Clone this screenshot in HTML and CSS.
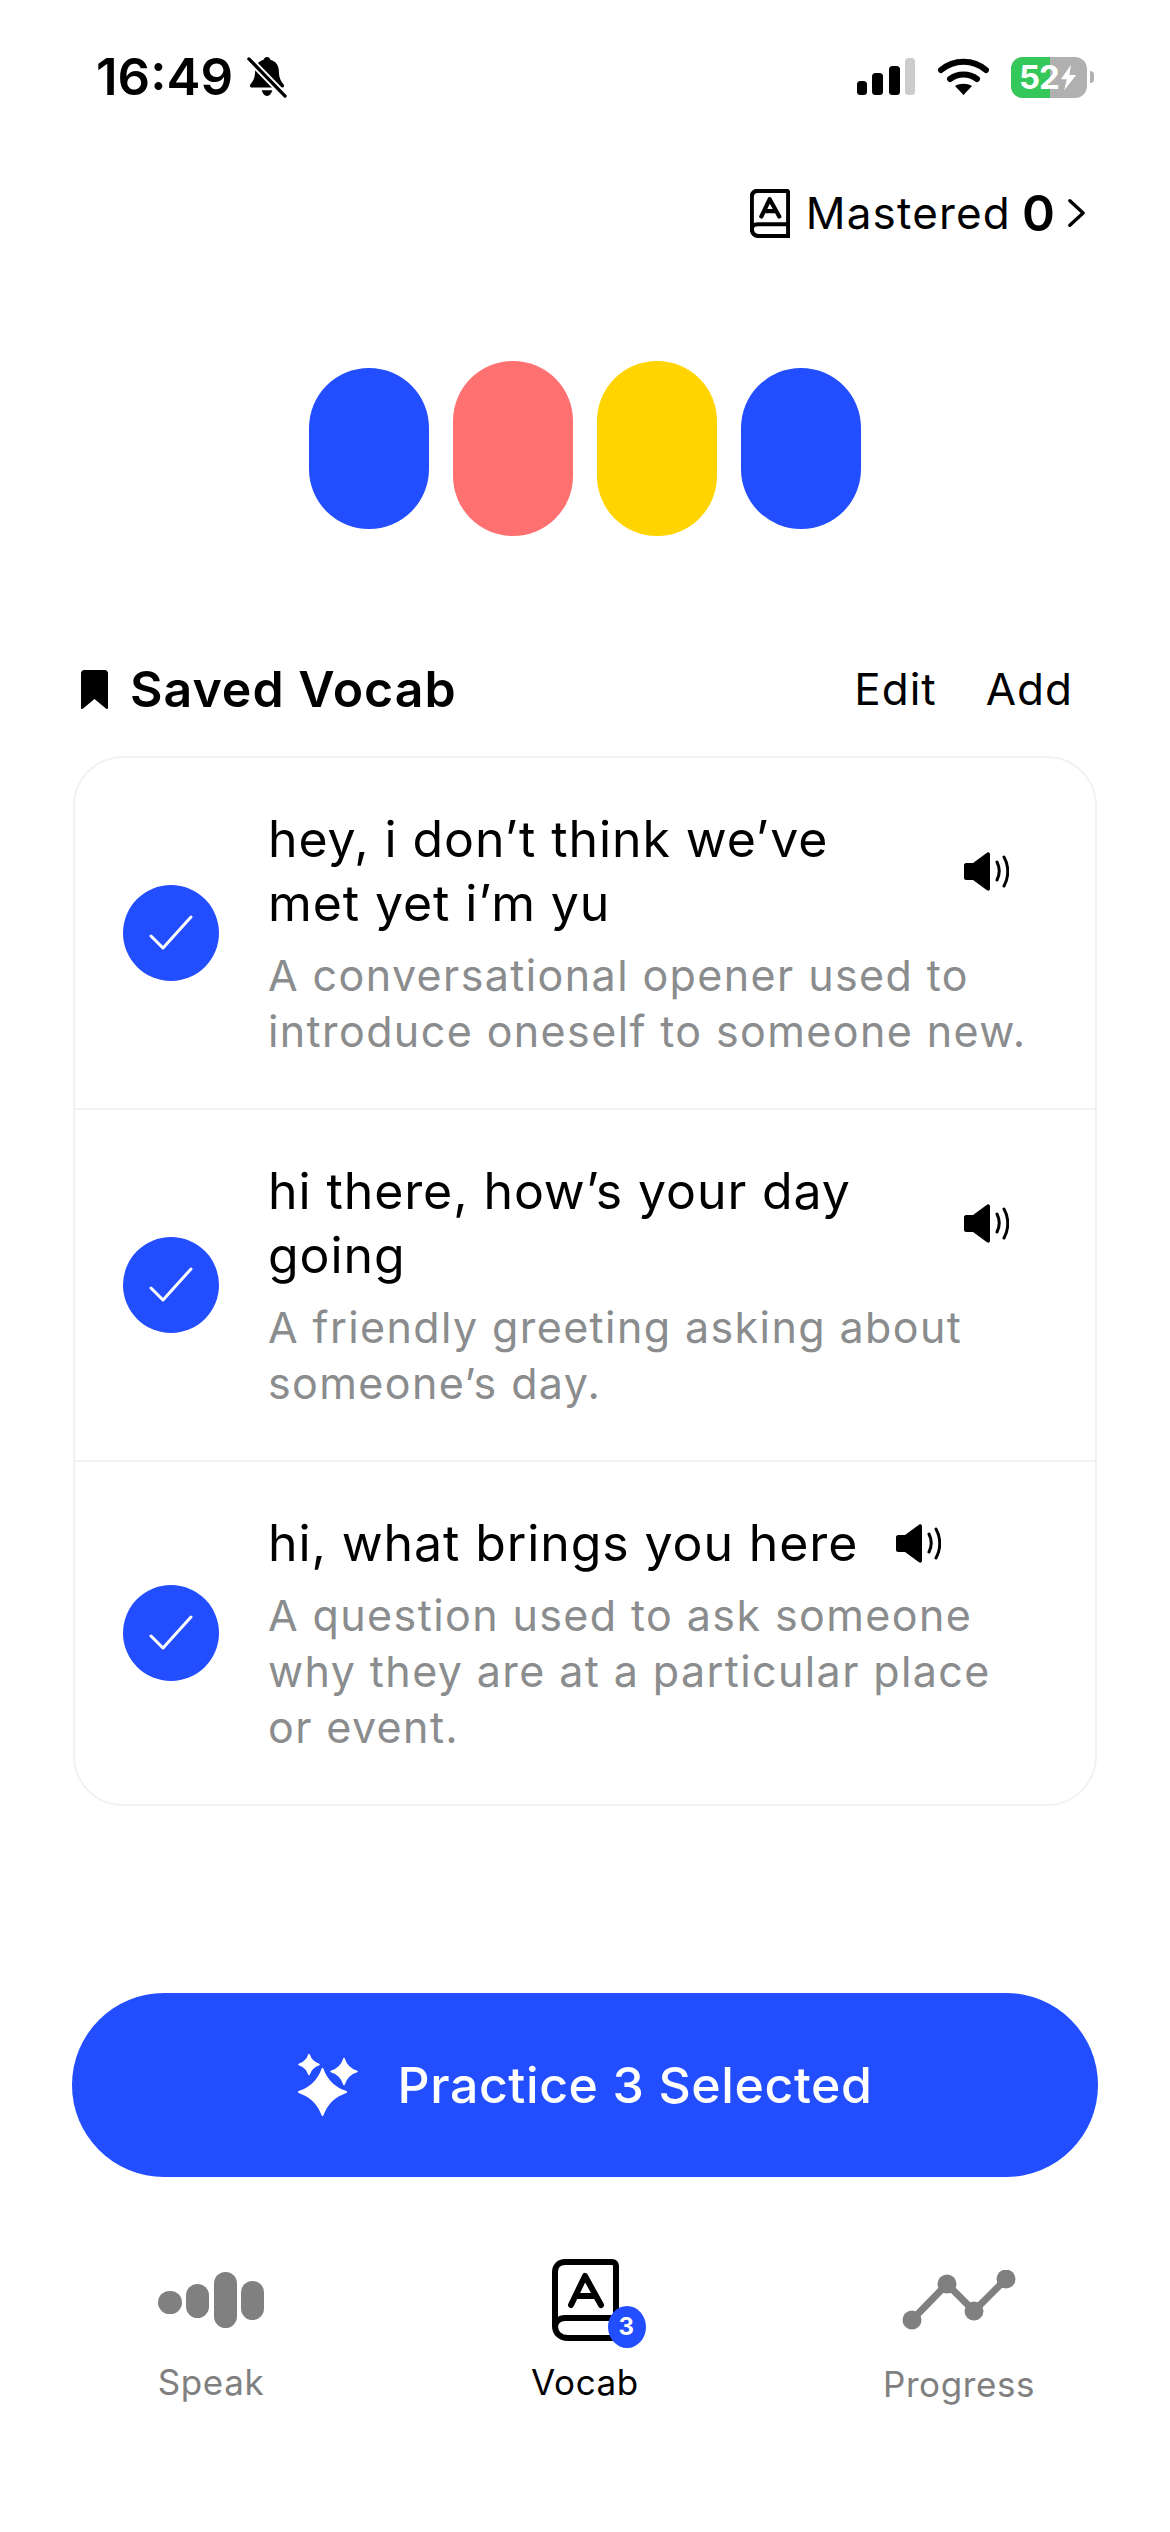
FILE: index.html
```html
<!DOCTYPE html>
<html lang="en">

<head>
    <meta charset="UTF-8">
    <meta name="viewport" content="width=device-width, initial-scale=1.0">
    <title>Vocab</title>
    <link rel="stylesheet" href="styles.css">
</head>

<body>
    <div class="status">
        <div class="status-left">
            <span class="time">16:49</span>
            <svg class="bell" width="40" height="42" viewBox="0 0 42 44">
                <path d="M21 1c2 0 3.500 1.500 3.500 3 6 1.500 9 6.500 9 12 0 7 2 10 5 14 1 2 0 3-1.500 3H5c-1.500 0-2.500-1-1.500-3 3-4 5-7 5-14 0-5.500 3-10.500 9-12C17.500 2.500 19 1 21 1z" fill="#000" />
                <path d="M15.500 36h11c-.5 3-3 6-5.500 6s-5-3-5.500-6z" fill="#000" />
                <path d="M1 2l39 40" stroke="#fff" stroke-width="7.500" />
                <path d="M2 3l38 39" stroke="#000" stroke-width="3.500" stroke-linecap="round" />
            </svg>
        </div>
        <div class="status-right">
            <svg width="58" height="38" viewBox="0 0 58 38">
                <rect x="0" y="23" width="10" height="14" rx="3.500" fill="#000" />
                <rect x="15" y="15" width="11" height="22" rx="3.500" fill="#000" />
                <rect x="32" y="8" width="11" height="29" rx="3.500" fill="#000" />
                <rect x="48" y="0" width="10" height="37" rx="3.500" fill="#ccc" />
            </svg>
            <svg class="wifi" width="51" height="38" viewBox="0 0 51 38">
                <path d="M3 12C16 1 35 1 48 12" fill="none" stroke="#000" stroke-width="6" stroke-linecap="round" />
                <path d="M12 21c8-6 19-6 27 0" fill="none" stroke="#000" stroke-width="6" stroke-linecap="round" />
                <path d="M17 28c5-3 12-3 17 0l-8.500 9z" fill="#000" />
            </svg>
            <div class="battery">
                <span class="battery-fill"></span>
                <span class="battery-num">52</span>
                <svg class="battery-bolt" width="17" height="27" viewBox="0 0 20 30">
                    <path d="M13 0L1 17h7l-3 13L19 12h-8z" fill="#fff" />
                </svg>
            </div>
            <span class="battery-cap"></span>
        </div>
    </div>

    <div class="mastered-row">
        <svg class="mastered-icon" width="40" height="49" viewBox="0 0 67 82" stroke-width="7"><use href="#book" /></svg>
        <span class="mastered-label">Mastered</span>
        <b class="mastered-count">0</b>
        <svg class="chevron" width="17" height="30" viewBox="0 0 18 30">
            <path d="M2 2l14 13L2 28" fill="none" stroke="#000" stroke-width="3.500" stroke-linecap="round" stroke-linejoin="round" />
        </svg>
    </div>

    <div class="pills">
        <span class="pill blue short"></span>
        <span class="pill coral"></span>
        <span class="pill yellow"></span>
        <span class="pill blue short"></span>
    </div>

    <div class="section-head">
        <div class="section-title">
            <svg width="27" height="39" viewBox="0 0 27 39">
                <path d="M3 0h21c1.500 0 3 1.500 3 3v35c0 1-1 1.500-1.800.8L13.500 29 1.800 38.800C1 39.500 0 39 0 38V3C0 1.500 1.500 0 3 0z" fill="#000" />
            </svg>
            <span>Saved Vocab</span>
        </div>
        <div class="section-actions">
            <span>Edit</span>
            <span>Add</span>
        </div>
    </div>

    <div class="card">
        <div class="row">
            <span class="tick">
                <svg width="44" height="36" viewBox="0 0 44 36"><path d="M2 21l12 12L42 2" fill="none" stroke="#fff" stroke-width="3" stroke-linecap="round" stroke-linejoin="round" /></svg>
            </span>
            <div class="row-text">
                <div class="phrase-line">
                    <p class="phrase wide">hey, i don’t think we’ve met yet i’m yu</p>
                    <svg class="speaker" width="45" height="39" viewBox="0 0 45 39"><use href="#speaker" /></svg>
                </div>
                <p class="meaning">A conversational opener used to introduce oneself to someone new.</p>
            </div>
        </div>
        <div class="row">
            <span class="tick">
                <svg width="44" height="36" viewBox="0 0 44 36"><path d="M2 21l12 12L42 2" fill="none" stroke="#fff" stroke-width="3" stroke-linecap="round" stroke-linejoin="round" /></svg>
            </span>
            <div class="row-text">
                <div class="phrase-line">
                    <p class="phrase wide">hi there, how’s your day going</p>
                    <svg class="speaker" width="45" height="39" viewBox="0 0 45 39"><use href="#speaker" /></svg>
                </div>
                <p class="meaning">A friendly greeting asking about someone’s day.</p>
            </div>
        </div>
        <div class="row">
            <span class="tick">
                <svg width="44" height="36" viewBox="0 0 44 36"><path d="M2 21l12 12L42 2" fill="none" stroke="#fff" stroke-width="3" stroke-linecap="round" stroke-linejoin="round" /></svg>
            </span>
            <div class="row-text">
                <div class="phrase-line">
                    <p class="phrase">hi, what brings you here</p>
                    <svg class="speaker speaker-near" width="45" height="39" viewBox="0 0 45 39"><use href="#speaker" /></svg>
                </div>
                <p class="meaning">A question used to ask someone why they are at a particular place or event.</p>
            </div>
        </div>
    </div>

    <button class="practice">
        <svg width="60" height="62" viewBox="0 0 60 62">
            <path d="M24.500 15Q30.500 32 48 38 30.500 44 24.500 61 18.500 44 1 38 18.500 32 24.500 15z" fill="#fff" stroke="#fff" stroke-width="2" stroke-linejoin="round" />
            <path d="M11 .5Q13.500 8 21 10.500 13.500 13 11 20.500 8.500 13 1 10.500 8.500 8 11 .5z" fill="#fff" stroke="#fff" stroke-width="1.500" stroke-linejoin="round" />
            <path d="M46 4.500Q49 14.500 59 17.500 49 20.500 46 30.500 43 20.500 33 17.500 43 14.500 46 4.500z" fill="#fff" stroke="#fff" stroke-width="1.500" stroke-linejoin="round" />
        </svg>
        <span>Practice 3 Selected</span>
    </button>

    <nav class="tabs">
        <div class="tab">
            <div class="tab-icon">
                <svg width="106" height="56" viewBox="0 0 106 56">
                    <rect x="0" y="19" width="24" height="23" rx="11.500" fill="#808080" />
                    <rect x="28" y="12" width="23" height="34" rx="11.500" fill="#808080" />
                    <rect x="56" y="0" width="23" height="56" rx="11.500" fill="#808080" />
                    <rect x="83" y="9" width="23" height="39" rx="11.500" fill="#808080" />
                </svg>
            </div>
            <span>Speak</span>
        </div>
        <div class="tab tab-active">
            <div class="tab-icon">
                <div class="book">
                    <svg width="67" height="82" viewBox="0 0 67 82" stroke-width="6"><use href="#book" /></svg>
                    <span class="badge">3</span>
                </div>
            </div>
            <span>Vocab</span>
        </div>
        <div class="tab tab-low">
            <div class="tab-icon">
                <svg width="114" height="60" viewBox="0 0 114 60">
                    <path d="M10 50L45 14l27 27 32-32" fill="none" stroke="#808080" stroke-width="7" />
                    <circle cx="10" cy="50" r="9.500" fill="#808080" />
                    <circle cx="45" cy="14" r="9.500" fill="#808080" />
                    <circle cx="72" cy="41" r="9.500" fill="#808080" />
                    <circle cx="104" cy="9" r="9.500" fill="#808080" />
                </svg>
            </div>
            <span>Progress</span>
        </div>
    </nav>

    <svg class="defs" width="0" height="0">
        <symbol id="speaker" viewBox="0 0 45 39">
            <path d="M2 11h7L23 .8c1.500-1 3-.3 3 1.700v34c0 2-1.500 2.700-3 1.700L9 28H2c-1 0-2-1-2-2V13c0-1 1-2 2-2z" fill="#000" />
            <path d="M33 10c3 6 3 12 0 18M40 5c5 9 5 20 0 29" fill="none" stroke="#000" stroke-width="3" stroke-linecap="round" />
        </symbol>
        <symbol id="book" viewBox="0 0 67 82">
            <path d="M13 3h47c2.500 0 4 1.500 4 4v72H16C8 79 3 74 3 67V13C3 7 7 3 13 3z" fill="none" stroke="#000" />
            <path d="M3 68c0-5 4-9 10-9h51" fill="none" stroke="#000" />
            <path d="M19 46l14-29 16 29M24 37h20" fill="none" stroke="#000" stroke-linecap="round" stroke-linejoin="round" />
        </symbol>
    </svg>
</body>

</html>
```

FILE: styles.css
```css
* {
    box-sizing: border-box;
}

html,
body {
    margin: 0;
    background: #fff;
}

body {
    width: 1170px;
    height: 2532px;
    overflow: hidden;
    font-family: "Inter", "Noto Sans", sans-serif;
    color: #000;
}

p {
    margin: 0;
}

.defs {
    display: block;
}

.status {
    display: flex;
    justify-content: space-between;
    align-items: center;
    height: 38px;
    margin-top: 58px;
    padding: 0 76px 0 96px;
}

.status-left,
.status-right {
    display: flex;
    align-items: center;
}

.time {
    font-size: 51px;
    font-weight: 600;
    line-height: 38px;
}

.bell {
    margin-left: 14px;
}

.wifi {
    margin-left: 23px;
}

.battery {
    position: relative;
    display: flex;
    align-items: center;
    width: 76px;
    height: 41px;
    margin-left: 22px;
    border-radius: 12px;
    background: #b0b0b0;
    overflow: hidden;
}

.battery-fill {
    position: absolute;
    left: 0;
    top: 0;
    width: 39px;
    height: 100%;
    background: #34c759;
}

.battery-num {
    position: relative;
    margin-left: 8px;
    font-size: 33px;
    font-weight: 700;
    letter-spacing: -1px;
    color: #fff;
}

.battery-bolt {
    position: relative;
    margin-left: 1px;
}

.battery-cap {
    width: 4px;
    height: 12px;
    margin-left: 3px;
    border-radius: 0 4px 4px 0;
    background: #b0b0b0;
}

.mastered-row {
    display: flex;
    justify-content: flex-end;
    align-items: center;
    margin-top: 91px;
    padding-right: 85px;
    height: 52px;
    font-size: 44px;
}

.mastered-label {
    letter-spacing: 1.2px;
}

.mastered-icon {
    margin-right: 16px;
}

.mastered-count {
    margin-left: 11px;
    font-size: 50px;
    font-weight: 600;
}

.chevron {
    margin-left: 13px;
}

.pills {
    display: flex;
    justify-content: center;
    align-items: center;
    gap: 24px;
    margin-top: 122px;
    padding-right: 0;
}

.pill {
    width: 120px;
    height: 175px;
    border-radius: 60px;
}

.pill.short {
    height: 161px;
}

.blue {
    background: #224eff;
}

.coral {
    background: #ff7070;
}

.yellow {
    background: #ffd400;
}

.section-head {
    display: flex;
    justify-content: space-between;
    align-items: center;
    margin-top: 123px;
    padding: 0 97px 0 81px;
    height: 60px;
}

.section-title {
    display: flex;
    align-items: center;
    gap: 22px;
    font-size: 50px;
    font-weight: 600;
    letter-spacing: 1px;
}

.section-actions {
    display: flex;
    gap: 49px;
    font-size: 44px;
    letter-spacing: 1px;
}

.card {
    width: 1024px;
    margin: 37px 0 0 73px;
    border: 2px solid #f2f2f2;
    border-radius: 50px;
}

.row {
    display: flex;
    align-items: center;
    gap: 49px;
    padding: 49px 48px 49px 48px;
    border-bottom: 2px solid #f2f2f2;
}

.row:last-child {
    border-bottom: 0;
}

.tick {
    display: flex;
    flex: none;
    justify-content: center;
    align-items: center;
    width: 96px;
    height: 96px;
    border-radius: 50%;
    background: #224eff;
}

.row-text {
    flex: 1;
}

.phrase-line {
    display: flex;
    align-items: center;
}

.phrase {
    font-size: 50px;
    line-height: 64px;
    letter-spacing: 0.9px;
}

.phrase.wide {
    width: 600px;
}

.speaker {
    flex: none;
    margin-left: 96px;
}

.speaker.speaker-near {
    margin-left: 38px;
}

.meaning {
    width: 770px;
    margin-top: 12px;
    font-size: 43px;
    line-height: 56px;
    letter-spacing: 1.4px;
    color: #8a8c8e;
}

.practice {
    display: flex;
    justify-content: center;
    align-items: center;
    gap: 40px;
    width: 1026px;
    height: 184px;
    margin: 187px 0 0 72px;
    border: none;
    border-radius: 92px;
    background: #224eff;
    color: #fff;
    font-family: inherit;
    font-size: 50px;
    font-weight: 500;
    letter-spacing: 0.6px;
}

.tabs {
    display: flex;
    margin-top: 82px;
    padding: 0 24px;
}

.tab {
    display: flex;
    flex: 1;
    flex-direction: column;
    align-items: center;
    gap: 19px;
    font-size: 35px;
    line-height: 44px;
    letter-spacing: 0.6px;
    color: #808080;
}

.tab-low {
    gap: 21px;
}

.tab-active {
    color: #000;
}

.tab-icon {
    display: flex;
    justify-content: center;
    align-items: center;
    height: 82px;
}

.book {
    position: relative;
    width: 67px;
    height: 82px;
}

.badge {
    position: absolute;
    right: -27px;
    bottom: -7px;
    width: 38px;
    height: 42px;
    border-radius: 50%;
    background: #224eff;
    color: #fff;
    font-size: 24px;
    font-weight: 700;
    line-height: 42px;
    text-align: center;
}
```
